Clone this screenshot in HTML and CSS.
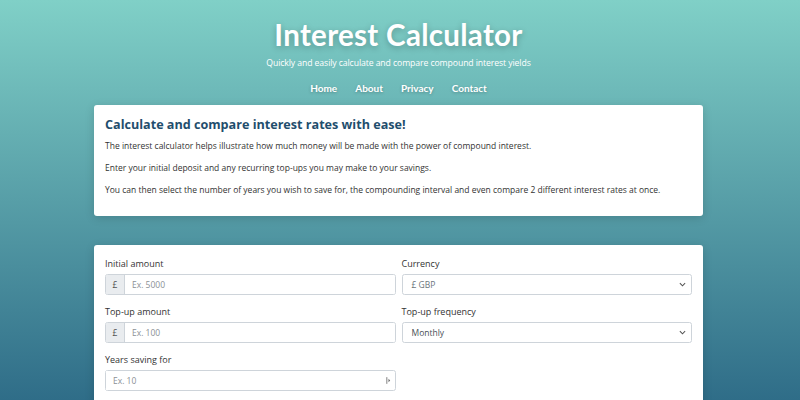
FILE: index.html
```html
<!DOCTYPE html>
<html lang="en">
<head>
<meta charset="utf-8">
<title>Interest Calculator</title>
<link rel="stylesheet" href="styles.css">
</head>
<body>
<header class="hero">
  <h1 class="title">Interest Calculator</h1>
  <p class="tagline">Quickly and easily calculate and compare compound interest yields</p>
  <nav class="nav">
    <a href="#">Home</a>
    <a href="#">About</a>
    <a href="#">Privacy</a>
    <a href="#">Contact</a>
  </nav>
</header>
<main class="container">
  <section class="card intro">
    <h2 class="card-title">Calculate and compare interest rates with ease!</h2>
    <p>The interest calculator helps illustrate how much money will be made with the power of compound interest.</p>
    <p>Enter your initial deposit and any recurring top-ups you may make to your savings.</p>
    <p>You can then select the number of years you wish to save for, the compounding interval and even compare 2 different interest rates at once.</p>
  </section>
  <section class="card form">
    <div class="row">
      <div class="group">
        <label>Initial amount</label>
        <div class="input-group">
          <span class="prefix">£</span>
          <input class="field" type="text" placeholder="Ex. 5000">
        </div>
      </div>
      <div class="group">
        <label>Currency</label>
        <div class="select"><span class="select-value light">£ GBP</span><svg class="chev" viewBox="0 0 8 5" width="7" height="5"><path d="M1 1l3 3 3-3" fill="none" stroke="#555" stroke-width="1.2"/></svg></div>
      </div>
    </div>
    <div class="row">
      <div class="group">
        <label>Top-up amount</label>
        <div class="input-group">
          <span class="prefix">£</span>
          <input class="field" type="text" placeholder="Ex. 100">
        </div>
      </div>
      <div class="group">
        <label>Top-up frequency</label>
        <div class="select"><span class="select-value">Monthly</span><svg class="chev" viewBox="0 0 8 5" width="7" height="5"><path d="M1 1l3 3 3-3" fill="none" stroke="#555" stroke-width="1.2"/></svg></div>
      </div>
    </div>
    <div class="row">
      <div class="group">
        <label>Years saving for</label>
        <div class="number">
          <input class="field plain" type="text" placeholder="Ex. 10">
          <svg class="spin" viewBox="0 0 6 10" width="5" height="9"><path d="M1 1v8" stroke="#666" stroke-width="1"/><path d="M3 3l2 2-2 2z" fill="#666"/></svg>
        </div>
      </div>
      <div class="group"></div>
    </div>
  </section>
</main>
</body>
</html>
```
FILE: styles.css
```css
html, body {
  margin: 0;
  padding: 0;
}
body {
  min-height: 400px;
  padding-right: 3px;
  background: linear-gradient(to bottom, #80d0c7 0px, #2f6d88 400px);
  font-family: "Open Sans", "Noto Sans", sans-serif;
  color: #212529;
}
.hero {
  text-align: center;
  color: #fff;
  padding-top: 17px;
}
.title {
  margin: 0;
  font-family: "Lato", sans-serif;
  font-weight: 700;
  font-size: 29.5px;
  line-height: 36px;
  letter-spacing: 0.3px;
  text-shadow: 0 2px 6px rgba(0, 0, 0, 0.25);
}
.tagline {
  margin: 3px 0 0;
  font-size: 8.7px;
  line-height: 14px;
  letter-spacing: -0.1px;
}
.nav {
  display: flex;
  justify-content: center;
  gap: 18px;
  margin-top: 11px;
}
.nav a {
  color: #fff;
  text-decoration: none;
  font-family: "Lato", sans-serif;
  font-weight: 700;
  font-size: 10px;
  line-height: 14px;
  text-shadow: 0 1px 3px rgba(0, 0, 0, 0.25);
}
.container {
  width: 609px;
  margin: 10px auto 0;
}
.card {
  background: #fff;
  border-radius: 3px;
  box-shadow: 0 2px 10px rgba(0, 0, 0, 0.15);
  padding: 12px 11px;
}
.intro {
  padding-top: 11px;
  padding-bottom: 11px;
}
.card-title {
  margin: 0 0 5px;
  font-family: "Open Sans", sans-serif;
  font-weight: 700;
  font-size: 12.6px;
  line-height: 18px;
  color: #1f4e6d;
}
.intro p {
  margin: 0 0 9px;
  font-size: 8.5px;
  line-height: 13px;
  color: #333;
}
.form {
  margin-top: 29px;
  padding-bottom: 20px;
}
.row {
  display: flex;
  gap: 6px;
  margin-bottom: 10px;
}
.group {
  flex: 1;
  display: flex;
  flex-direction: column;
}
label {
  font-size: 9px;
  line-height: 14px;
  color: #333;
  margin-bottom: 3px;
}
.input-group {
  display: flex;
  height: 21px;
  border: 1px solid #ced4da;
  border-radius: 2.5px;
  box-sizing: border-box;
  overflow: hidden;
}
.prefix {
  width: 18px;
  background: #e9ecef;
  border-right: 1px solid #ced4da;
  font-size: 8.5px;
  color: #555;
  display: flex;
  align-items: center;
  justify-content: center;
}
.field {
  flex: 1;
  min-width: 0;
  border: 0;
  outline: 0;
  padding: 0 7px;
  font-family: inherit;
  font-size: 8.5px;
  color: #495057;
  background: #fff;
}
.field::placeholder {
  color: #8a9096;
}
.select, .number {
  display: flex;
  align-items: center;
  height: 21px;
  box-sizing: border-box;
  border: 1px solid #ced4da;
  border-radius: 2.5px;
  padding: 0 5px 0 9px;
}
.select-value {
  flex: 1;
  font-size: 8.5px;
  color: #495057;
}
.select-value.light {
  color: #6c757d;
}
.number {
  padding: 0 3px 0 0;
}
.field.plain {
  height: 19px;
}
.spin {
  margin-right: 1px;
}
```
